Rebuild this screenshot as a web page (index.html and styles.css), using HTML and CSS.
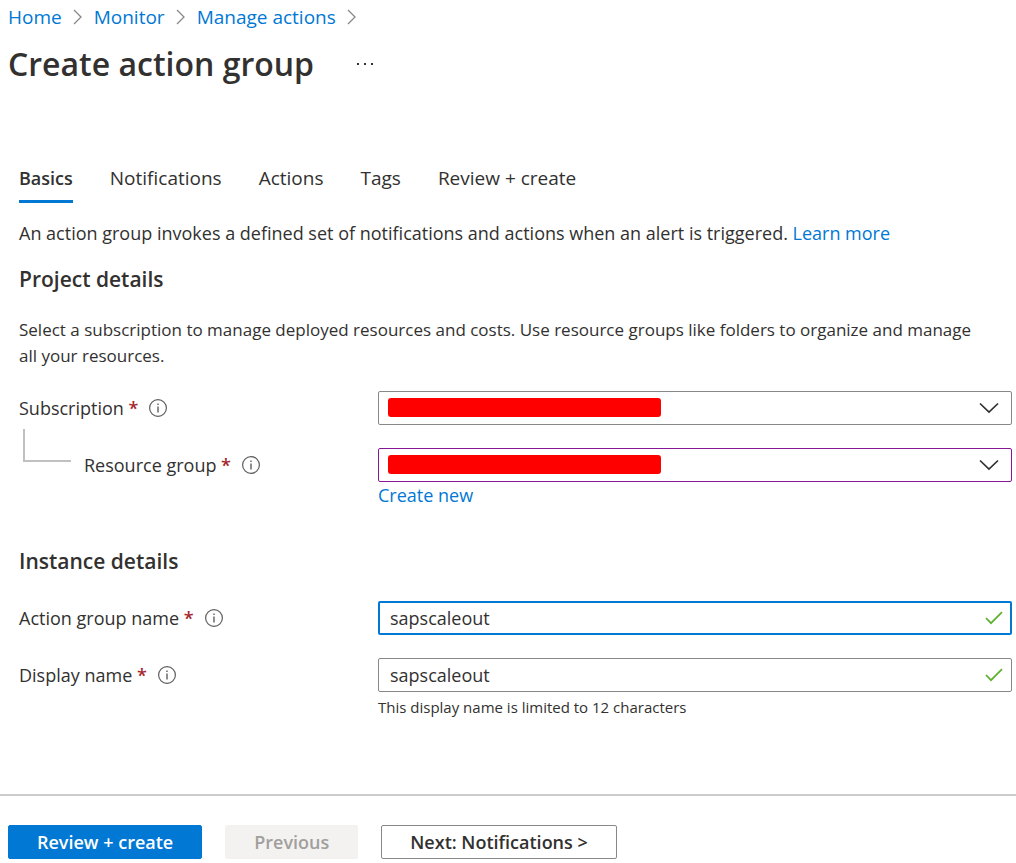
FILE: index.html
```html
<!DOCTYPE html>
<html lang="en">
<head>
    <meta charset="UTF-8">
    <meta name="viewport" content="width=device-width, initial-scale=1.0">
    <title>Create action group</title>
    <link rel="stylesheet" href="styles.css">
</head>
<body>
    <!-- shared icons -->
    <svg class="sprite" aria-hidden="true">
        <symbol id="crumb" viewBox="0 0 10 16"><path d="M1 1l7 7-7 7" fill="none" stroke="#8a8886" stroke-width="1.3"/></symbol>
        <symbol id="info" viewBox="0 0 20 20">
            <circle cx="10" cy="10" r="8.4" fill="none" stroke="#605e5c" stroke-width="1.2"/>
            <path d="M10 8.5v6M10 5.5v1.6" fill="none" stroke="#605e5c" stroke-width="1.4"/>
        </symbol>
        <symbol id="chevron" viewBox="0 0 20 12"><path d="M1 1.5l9 8.5 9-8.5" fill="none" stroke="#323130" stroke-width="1.7"/></symbol>
        <symbol id="check" viewBox="0 0 18 14"><path d="M1 7l5 5.2L17 1.2" fill="none" stroke="#5db12f" stroke-width="1.7"/></symbol>
    </svg>

    <header class="page-header">
        <nav class="breadcrumb" aria-label="Breadcrumb">
            <a href="#">Home</a>
            <svg class="crumb-icon" aria-hidden="true"><use href="#crumb"/></svg>
            <a href="#">Monitor</a>
            <svg class="crumb-icon" aria-hidden="true"><use href="#crumb"/></svg>
            <a href="#">Manage actions</a>
            <svg class="crumb-icon" aria-hidden="true"><use href="#crumb"/></svg>
        </nav>
        <div class="title-row">
            <h1>Create action group</h1>
            <button type="button" class="more" aria-label="More">
                <svg width="18" height="4" viewBox="0 0 18 4" fill="#323130"><path d="M1 1h2v2H1zM8 1h2v2H8zM15 1h2v2h-2z"/></svg>
            </button>
        </div>
    </header>

    <form>
        <main class="content">
            <nav class="tabs">
                <a href="#" class="tab active">Basics</a>
                <a href="#" class="tab">Notifications</a>
                <a href="#" class="tab">Actions</a>
                <a href="#" class="tab">Tags</a>
                <a href="#" class="tab">Review + create</a>
            </nav>

            <p class="intro">An action group invokes a defined set of notifications and actions when an alert is triggered. <a href="#">Learn more</a></p>

            <section>
                <h2>Project details</h2>
                <p class="description">Select a subscription to manage deployed resources and costs. Use resource groups like folders to organize and manage all your resources.</p>

                <div class="row">
                    <div class="label">
                        <label for="subscription">Subscription <span class="required">*</span></label>
                        <svg class="info-icon" aria-hidden="true"><use href="#info"/></svg>
                    </div>
                    <div class="field">
                        <select id="subscription"><option></option></select>
                        <span class="redacted"></span>
                        <svg class="chevron-icon" aria-hidden="true"><use href="#chevron"/></svg>
                    </div>
                </div>

                <div class="row">
                    <div class="label">
                        <span class="connector"></span>
                        <label for="resourceGroup">Resource group <span class="required">*</span></label>
                        <svg class="info-icon" aria-hidden="true"><use href="#info"/></svg>
                    </div>
                    <div class="field">
                        <select id="resourceGroup" class="edited"><option></option></select>
                        <span class="redacted"></span>
                        <svg class="chevron-icon" aria-hidden="true"><use href="#chevron"/></svg>
                        <a href="#" class="create-new">Create new</a>
                    </div>
                </div>
            </section>

            <section class="instance">
                <h2>Instance details</h2>

                <div class="row">
                    <div class="label">
                        <label for="groupName">Action group name <span class="required">*</span></label>
                        <svg class="info-icon" aria-hidden="true"><use href="#info"/></svg>
                    </div>
                    <div class="field">
                        <input type="text" id="groupName" class="focused" value="sapscaleout">
                        <svg class="check-icon" aria-hidden="true"><use href="#check"/></svg>
                    </div>
                </div>

                <div class="row">
                    <div class="label">
                        <label for="displayName">Display name <span class="required">*</span></label>
                        <svg class="info-icon" aria-hidden="true"><use href="#info"/></svg>
                    </div>
                    <div class="field">
                        <input type="text" id="displayName" value="sapscaleout">
                        <svg class="check-icon" aria-hidden="true"><use href="#check"/></svg>
                        <p class="hint">This display name is limited to 12 characters</p>
                    </div>
                </div>
            </section>
        </main>

        <footer class="actions">
            <button type="button" class="btn primary">Review + create</button>
            <button type="button" class="btn" disabled>Previous</button>
            <button type="button" class="btn">Next: Notifications &gt;</button>
        </footer>
    </form>
</body>
</html>
```
FILE: styles.css
```css
* {
    box-sizing: border-box;
}
body {
    margin: 0;
    background-color: #ffffff;
    color: #323130;
    font-family: "Segoe UI", "Open Sans", "Noto Sans", sans-serif;
    font-size: 18px;
    line-height: 26px;
}
a {
    color: #0078d4;
    text-decoration: none;
}
h1, h2, p {
    margin: 0;
}
.sprite {
    position: absolute;
    width: 0;
    height: 0;
}

/* header */
.page-header {
    padding: 4px 8px 0;
}
.breadcrumb {
    display: flex;
    align-items: center;
    gap: 11px;
    font-size: 19px;
}
.crumb-icon {
    width: 10px;
    height: 16px;
}
.title-row {
    display: flex;
    align-items: center;
    gap: 42px;
    margin-top: 12px;
}
h1 {
    font-size: 32px;
    font-weight: 600;
    line-height: 44px;
}
.more {
    display: flex;
    padding: 0;
    border: none;
    background: none;
}

/* tabs */
.content {
    padding: 79px 4px 0 19px;
}
.tabs {
    display: flex;
    gap: 37px;
}
.tab {
    padding-bottom: 9px;
    border-bottom: 3px solid transparent;
    color: #323130;
    font-size: 19px;
}
.tab.active {
    border-bottom-color: #0078d4;
    font-size: 18px;
    font-weight: 600;
}

/* form */
.intro {
    margin-top: 17px;
}
h2 {
    margin-top: 18px;
    font-size: 21px;
    font-weight: 600;
    line-height: 30px;
}
.description {
    margin: 23px 0 22px;
    padding-right: 24px;
    font-size: 17px;
}
.instance h2 {
    margin: 38px 0 25px;
}
.row {
    display: grid;
    grid-template-columns: 359px 1fr;
}
.row + .row {
    margin-top: 23px;
}
.label {
    display: flex;
    align-items: center;
    height: 34px;
}
.required {
    color: #a4262c;
    font-weight: 600;
}
.info-icon {
    width: 20px;
    height: 20px;
    margin-left: 10px;
}
.connector {
    align-self: flex-start;
    width: 48px;
    height: 33px;
    margin: -19px 13px 0 4px;
    border: solid #c0c0c0;
    border-width: 0 0 2px 2px;
}
.field {
    position: relative;
}
select, input {
    display: block;
    width: 100%;
    height: 34px;
    padding: 0 11px;
    border: 1px solid #8a8886;
    border-radius: 2px;
    outline: none;
    background-color: #ffffff;
    color: #323130;
    font: inherit;
    appearance: none;
}
.edited {
    border-color: #881798;
}
.focused {
    padding: 0 10px;
    border: 2px solid #0078d4;
}
.redacted {
    position: absolute;
    top: 7px;
    left: 10px;
    width: 273px;
    height: 19px;
    border-radius: 3px;
    background-color: #ff0000;
}
.chevron-icon, .check-icon {
    position: absolute;
    pointer-events: none;
}
.chevron-icon {
    top: 11px;
    right: 13px;
    width: 20px;
    height: 12px;
}
.check-icon {
    top: 10px;
    right: 9px;
    width: 18px;
    height: 14px;
}
.create-new {
    display: inline-block;
}
.hint {
    margin-top: 4px;
    font-size: 15px;
    line-height: 22px;
}

/* footer */
.actions {
    display: flex;
    gap: 23px;
    margin-top: 76px;
    padding: 29px 8px 4px;
    border-top: 2px solid #cccccc;
}
.btn {
    height: 34px;
    padding: 0 28px;
    border: 1px solid #8a8886;
    border-radius: 2px;
    background-color: #ffffff;
    color: #323130;
    font: inherit;
    font-weight: 600;
}
.btn.primary {
    border-color: #0078d4;
    background-color: #0078d4;
    color: #ffffff;
}
.btn:disabled {
    border-color: #f3f2f1;
    background-color: #f3f2f1;
    color: #a19f9d;
}
```
